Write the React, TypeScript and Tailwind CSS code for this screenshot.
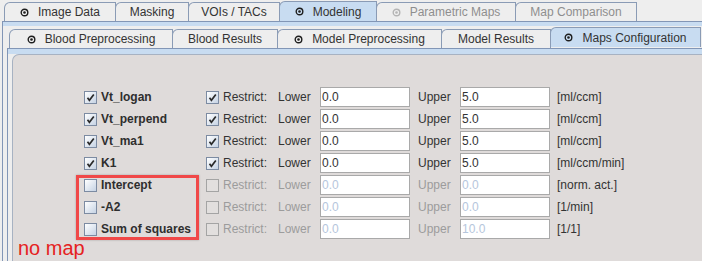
import React from 'react';

type TabDef = { label: string; w: string; icon?: boolean; selected?: boolean; disabled?: boolean };

const topTabs: TabDef[] = [
  { label: 'Image Data', w: 'w-[112px]', icon: true },
  { label: 'Masking', w: 'w-[74px]' },
  { label: 'VOIs / TACs', w: 'w-[92px]' },
  { label: 'Modeling', w: 'w-[98px]', icon: true, selected: true },
  { label: 'Parametric Maps', w: 'w-[140px]', icon: true, disabled: true },
  { label: 'Map Comparison', w: 'w-[122px]', disabled: true },
];

const innerTabs: TabDef[] = [
  { label: 'Blood Preprocessing', w: 'w-[164px]', icon: true },
  { label: 'Blood Results', w: 'w-[106px]' },
  { label: 'Model Preprocessing', w: 'w-[165px]', icon: true },
  { label: 'Model Results', w: 'w-[110px]' },
  { label: 'Maps Configuration', w: 'w-[151px]', icon: true, selected: true },
];

const rows = [
  { name: 'Vt_logan', on: true, lower: '0.0', upper: '5.0', unit: '[ml/ccm]' },
  { name: 'Vt_perpend', on: true, lower: '0.0', upper: '5.0', unit: '[ml/ccm]' },
  { name: 'Vt_ma1', on: true, lower: '0.0', upper: '5.0', unit: '[ml/ccm]' },
  { name: 'K1', on: true, lower: '0.0', upper: '5.0', unit: '[ml/ccm/min]' },
  { name: 'Intercept', on: false, lower: '0.0', upper: '0.0', unit: '[norm. act.]' },
  { name: '-A2', on: false, lower: '0.0', upper: '0.0', unit: '[1/min]' },
  { name: 'Sum of squares', on: false, lower: '0.0', upper: '10.0', unit: '[1/1]' },
];

function TabIcon({ disabled }: { disabled?: boolean }) {
  const c = disabled ? '#b4b4b4' : '#1e1e1e';
  return (
    <svg width="9" height="9" viewBox="0 0 9 9" className="shrink-0">
      <circle cx="4.5" cy="4.5" r="3.3" fill="none" stroke={c} strokeWidth="1.4" />
      <circle cx="4.5" cy="4.5" r="1.3" fill={c} />
    </svg>
  );
}

function Tab({ tab, first }: { tab: TabDef; first: boolean }) {
  return (
    <div
      className={`${tab.w} ${first ? '' : '-ml-px'} flex items-center justify-center gap-[9px] border-l border-t border-r border-[#8a9bb5] rounded-tl-[6px] ${
        tab.selected ? 'bg-[#c8dcf1] h-[20px] relative z-10' : 'bg-[#eeeeee] h-[19px] mt-auto'
      } ${tab.disabled ? 'text-[#8e8e8e]' : 'text-[#333333]'}`}
    >
      {tab.icon && <TabIcon disabled={tab.disabled} />}
      <span>{tab.label}</span>
    </div>
  );
}

function Check({ checked, disabled }: { checked: boolean; disabled?: boolean }) {
  return (
    <span
      className={`w-[13px] h-[13px] shrink-0 border flex items-center justify-center ${
        disabled ? 'border-[#a4a4a4] bg-[#e2dfde]' : 'border-[#7c8ba2] bg-gradient-to-br from-[#ffffff] to-[#c6d3e4]'
      }`}
    >
      {checked && (
        <svg width="9" height="9" viewBox="0 0 9 9">
          <path d="M1.5 4.8 L3.4 7.3 L7.8 1.6" stroke="#2a2a2a" strokeWidth="1.7" fill="none" />
        </svg>
      )}
    </span>
  );
}

function Field({ value, disabled }: { value: string; disabled: boolean }) {
  return (
    <div
      className={`w-[90px] h-[20px] bg-white border border-[#a9a9a9] pl-[1px] flex items-center ${
        disabled ? 'text-[#b6c6dc]' : 'text-[#333333]'
      }`}
    >
      {value}
    </div>
  );
}

export default function App() {
  return (
    <div className="relative w-[702px] h-[261px] overflow-hidden bg-[#eeeeee] text-[12px] text-[#333333] font-['Liberation_Sans',Arial,sans-serif]">
      {/* top tab row */}
      <div className="flex pl-[4px] pt-[1px] h-[21px]">
        {topTabs.map((t, i) => (
          <Tab key={t.label} tab={t} first={i === 0} />
        ))}
      </div>

      {/* outer tab panel */}
      <div className="ml-[2px] border-l border-t border-[#8296b6]">
        <div className="h-[4px] bg-[#c8dcf1]" />
        <div className="pl-[4px] pt-[1px]">
          <div className="flex pl-[2px] h-[21px]">
            {innerTabs.map((t, i) => (
              <Tab key={t.label} tab={t} first={i === 0} />
            ))}
          </div>

          {/* inner tab panel */}
          <div className="border-l border-t border-[#8296b6]">
            <div className="h-[5px] bg-[#c8dcf1]" />
            <div className="ml-[4px] h-[220px] border-l border-t border-[#a7b2c2] rounded-tl-[7px] bg-[#dfdbda] pt-[32px] pl-[71px]">
              <div className="grid gap-y-[2px]">
                {rows.map((r) => {
                  const dis = !r.on;
                  const sub = dis ? 'text-[#9c9c9c]' : 'text-[#333333]';
                  return (
                    <div key={r.name} className="flex items-center h-[20px]">
                      <Check checked={r.on} />
                      <span className="ml-[4px] w-[105px] font-bold text-[#2e2e2e]">{r.name}</span>
                      <Check checked={r.on} disabled={dis} />
                      <span className={`ml-[4px] w-[55px] ${sub}`}>Restrict:</span>
                      <span className={`w-[42px] ${sub}`}>Lower</span>
                      <Field value={r.lower} disabled={dis} />
                      <span className={`ml-[8px] w-[42px] ${sub}`}>Upper</span>
                      <Field value={r.upper} disabled={dis} />
                      <span className="ml-[7px] text-[#333333]">{r.unit}</span>
                    </div>
                  );
                })}
              </div>
            </div>
          </div>
        </div>
      </div>

      {/* annotation overlay */}
      <div className="absolute left-[76px] top-[175px] w-[123px] h-[65px] border-[3px] border-[#f04848] shadow-[0_0_2px_rgba(0,0,0,0.25)]" />
      <div className="absolute left-[18px] top-[238px] text-[20px] leading-none text-[#e52222]">no map</div>
    </div>
  );
}
